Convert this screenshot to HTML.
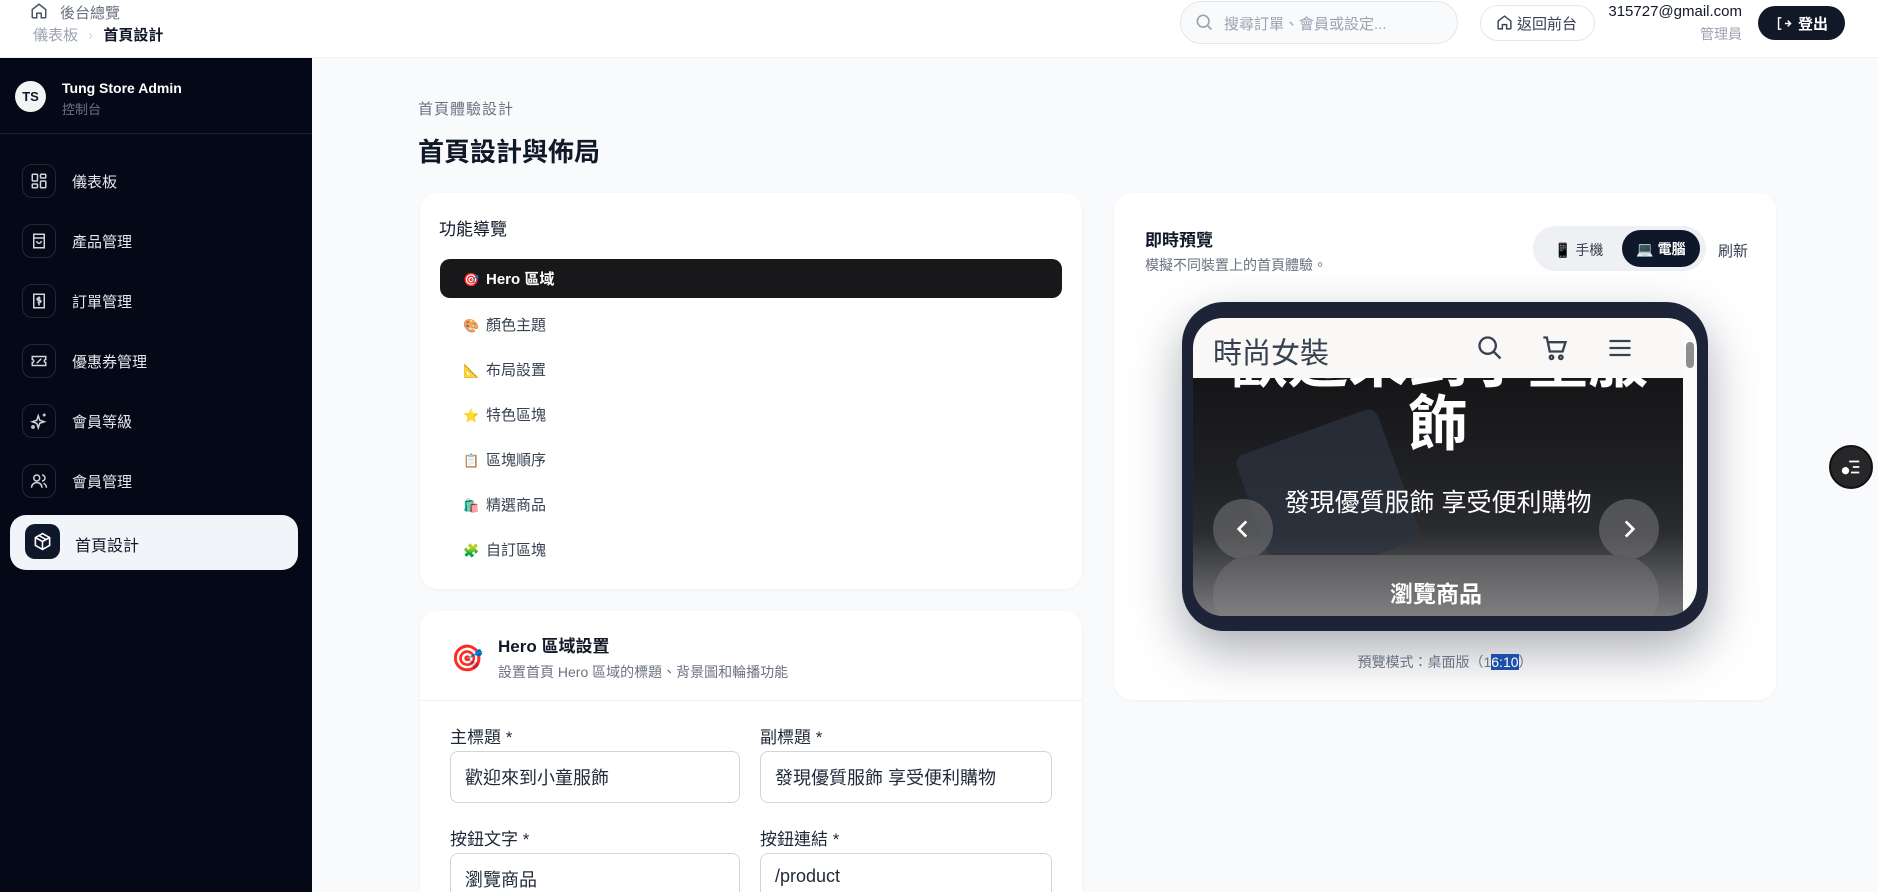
<!DOCTYPE html>
<html style="width:1878px;height:892px;overflow:hidden"><head><meta charset="utf-8"><style>
*{box-sizing:border-box;margin:0;padding:0}
body{width:1878px;height:892px;overflow:hidden;background:#f8fafc;font-family:"Liberation Sans","Noto Sans CJK TC",sans-serif;position:relative;color:#111827}
.a{position:absolute}
.side{left:0;top:58px;width:312px;height:834px;background:#040817}
.ib{position:absolute;left:22px;width:34px;height:34px;border:1px solid #1f2937;border-radius:10px;display:flex;align-items:center;justify-content:center}
.mt{position:absolute;left:72px;color:#e5e7eb;font-size:15px}
.card{background:#fff;border-radius:18px;box-shadow:0 1px 3px rgba(0,0,0,.04)}
.ni{position:absolute;left:463px;font-size:15px;color:#374151}
.ni span{display:inline-block;width:23px;font-size:13px}
.lbl{font-size:17px;color:#1f2937}
.inp{border:1px solid #d1d5db;border-radius:8px;background:#fff;font-size:18px;color:#1f2937;padding:0 14px;display:flex;align-items:center}
</style></head><body>
<!-- header -->
<div class="a" style="left:0;top:0;width:1878px;height:58px;background:#fff;border-bottom:1px solid #eef0f3"></div>
<svg class="a" style="left:30px;top:2px" width="18" height="18" viewBox="0 0 24 24" fill="none" stroke="#4b5563" stroke-width="2"><path d="M3 10l9-7 9 7v10a1 1 0 0 1-1 1h-5v-6h-6v6H4a1 1 0 0 1-1-1z"/></svg>
<div class="a" style="left:60px;top:2px;font-size:15px;color:#6b7280">後台總覽</div>
<div class="a" style="left:33px;top:24px;font-size:15px;color:#9ca3af">儀表板 <span style="margin:0 6px;color:#cbd5e1">›</span> <b style="color:#111827">首頁設計</b></div>
<div class="a" style="left:1180px;top:1px;width:278px;height:43px;border:1px solid #e5e7eb;border-radius:22px;background:#f9fafb"></div>
<svg class="a" style="left:1194px;top:12px" width="20" height="20" viewBox="0 0 24 24" fill="none" stroke="#9ca3af" stroke-width="2"><circle cx="11" cy="11" r="7"/><path d="M16 16l5 5"/></svg>
<div class="a" style="left:1224px;top:13px;font-size:15px;color:#9ca3af">搜尋訂單、會員或設定...</div>
<div class="a" style="left:1480px;top:5px;width:115px;height:36px;border:1px solid #e5e7eb;border-radius:18px;background:#fff"></div>
<svg class="a" style="left:1496px;top:14px" width="17" height="17" viewBox="0 0 24 24" fill="none" stroke="#374151" stroke-width="2"><path d="M3 10l9-7 9 7v10a1 1 0 0 1-1 1h-5v-6h-6v6H4a1 1 0 0 1-1-1z"/></svg>
<div class="a" style="left:1517px;top:13px;font-size:15px;color:#374151">返回前台</div>
<div class="a" style="left:1600px;top:3px;width:142px;text-align:right;font-size:15px;color:#111827">315727@gmail.com</div>
<div class="a" style="left:1600px;top:24px;width:142px;text-align:right;font-size:14px;color:#9ca3af">管理員</div>
<div class="a" style="left:1758px;top:6px;width:87px;height:34px;border-radius:17px;background:#111827;color:#fff;font-size:15px;font-weight:bold;display:flex;align-items:center;justify-content:center;gap:6px"><svg width="17" height="17" viewBox="0 0 24 24" fill="none" stroke="#fff" stroke-width="2"><path d="M9 4H5v16h4M14 12h8M18 8l4 4-4 4"/></svg>登出</div>
<!-- sidebar -->
<div class="a side"></div>
<div class="a" style="left:15px;top:81px;width:31px;height:31px;border-radius:50%;background:#f3f4f6;color:#111827;font-size:13px;font-weight:bold;display:flex;align-items:center;justify-content:center">TS</div>
<div class="a" style="left:62px;top:80px;color:#fff;font-size:14px;font-weight:bold">Tung Store Admin</div>
<div class="a" style="left:62px;top:99px;color:#6b7280;font-size:13px">控制台</div>
<div class="a" style="left:0;top:133px;width:312px;height:1px;background:#1a2030"></div>
<div class="ib" style="top:164px"><svg width="18" height="18" viewBox="0 0 24 24" fill="none" stroke="#d1d5db" stroke-width="2"><rect x="3" y="3" width="7" height="9" rx="1"/><rect x="14" y="3" width="7" height="5" rx="1"/><rect x="14" y="12" width="7" height="9" rx="1"/><rect x="3" y="16" width="7" height="5" rx="1"/></svg></div>
<div class="mt" style="top:171px">儀表板</div>
<div class="ib" style="top:224px"><svg width="18" height="18" viewBox="0 0 24 24" fill="none" stroke="#d1d5db" stroke-width="2"><path d="M5 3h14v18H5zM5 8h14M9 12a3 3 0 0 0 6 0"/></svg></div>
<div class="mt" style="top:231px">產品管理</div>
<div class="ib" style="top:284px"><svg width="18" height="18" viewBox="0 0 24 24" fill="none" stroke="#d1d5db" stroke-width="2"><path d="M5 3h14v18H5z"/><path d="M14 8h-3a1.5 1.5 0 0 0 0 3h2a1.5 1.5 0 0 1 0 3h-3M12 6v12"/></svg></div>
<div class="mt" style="top:291px">訂單管理</div>
<div class="ib" style="top:344px"><svg width="18" height="18" viewBox="0 0 24 24" fill="none" stroke="#d1d5db" stroke-width="2"><path d="M3 6h18v4a2 2 0 0 0 0 4v4H3v-4a2 2 0 0 0 0-4z M9 15l6-6"/></svg></div>
<div class="mt" style="top:351px">優惠券管理</div>
<div class="ib" style="top:404px"><svg width="18" height="18" viewBox="0 0 24 24" fill="none" stroke="#d1d5db" stroke-width="2"><path d="M11 5l2 6 6 2-6 2-2 6-2-6-6-2 6-2zM19 2v4M17 4h4"/><circle cx="4" cy="20" r="1.5"/></svg></div>
<div class="mt" style="top:411px">會員等級</div>
<div class="ib" style="top:464px"><svg width="18" height="18" viewBox="0 0 24 24" fill="none" stroke="#d1d5db" stroke-width="2"><circle cx="9" cy="8" r="4"/><path d="M2 21a7 7 0 0 1 14 0M16 4a4 4 0 0 1 0 8M22 21a7 7 0 0 0-4-6"/></svg></div>
<div class="mt" style="top:471px">會員管理</div>
<div class="a" style="left:10px;top:515px;width:288px;height:55px;border-radius:16px;background:#f1f5f9"></div>
<div class="a" style="left:25px;top:524px;width:35px;height:35px;border-radius:10px;background:#0f172a;display:flex;align-items:center;justify-content:center"><svg width="19" height="19" viewBox="0 0 24 24" fill="none" stroke="#fff" stroke-width="2"><path d="M12 2l9 5v10l-9 5-9-5V7zM3 7l9 5 9-5M12 12v10M7.5 4.5l9 5"/></svg></div>
<div class="a" style="left:75px;top:532px;font-size:16px;color:#111827">首頁設計</div>
<!-- main title -->
<div class="a" style="left:418px;top:98px;font-size:15px;color:#6b7280;letter-spacing:1px">首頁體驗設計</div>
<div class="a" style="left:418px;top:132px;font-size:26px;font-weight:bold;color:#111827">首頁設計與佈局</div>
<!-- nav card -->
<div class="a card" style="left:420px;top:193px;width:662px;height:396px"></div>
<div class="a" style="left:439px;top:215px;font-size:17px;color:#111827">功能導覽</div>
<div class="a" style="left:440px;top:259px;width:622px;height:39px;border-radius:10px;background:#18181b"></div>
<div class="ni" style="top:268px;color:#fff;font-weight:bold"><span>🎯</span>Hero 區域</div>
<div class="ni" style="top:314px"><span>🎨</span>顏色主題</div>
<div class="ni" style="top:359px"><span>📐</span>布局設置</div>
<div class="ni" style="top:404px"><span>⭐</span>特色區塊</div>
<div class="ni" style="top:449px"><span>📋</span>區塊順序</div>
<div class="ni" style="top:494px"><span>🛍️</span>精選商品</div>
<div class="ni" style="top:539px"><span>🧩</span>自訂區塊</div>
<!-- hero card -->
<div class="a card" style="left:420px;top:611px;width:662px;height:281px;border-radius:18px 18px 0 0"></div>
<div class="a" style="left:451px;top:643px;font-size:26px">🎯</div>
<div class="a" style="left:498px;top:632px;font-size:17px;font-weight:bold;color:#111827">Hero 區域設置</div>
<div class="a" style="left:498px;top:662px;font-size:14px;color:#6b7280">設置首頁 Hero 區域的標題、背景圖和輪播功能</div>
<div class="a" style="left:420px;top:700px;width:662px;height:1px;background:#eef0f3"></div>
<div class="a lbl" style="left:450px;top:723px">主標題 *</div>
<div class="a lbl" style="left:760px;top:723px">副標題 *</div>
<div class="a inp" style="left:450px;top:751px;width:290px;height:52px">歡迎來到小童服飾</div>
<div class="a inp" style="left:760px;top:751px;width:292px;height:52px">發現優質服飾 享受便利購物</div>
<div class="a lbl" style="left:450px;top:825px">按鈕文字 *</div>
<div class="a lbl" style="left:760px;top:825px">按鈕連結 *</div>
<div class="a inp" style="left:450px;top:853px;width:290px;height:39px;border-bottom:none;border-radius:8px 8px 0 0;align-items:flex-start;padding-top:12px">瀏覽商品</div>
<div class="a inp" style="left:760px;top:853px;width:292px;height:39px;border-bottom:none;border-radius:8px 8px 0 0;align-items:flex-start;padding-top:12px">/product</div>
<!-- preview card -->
<div class="a card" style="left:1114px;top:193px;width:662px;height:507px"></div>
<div class="a" style="left:1145px;top:226px;font-size:17px;font-weight:bold">即時預覽</div>
<div class="a" style="left:1145px;top:255px;font-size:14px;color:#6b7280">模擬不同裝置上的首頁體驗。</div>
<div class="a" style="left:1533px;top:226px;width:173px;height:45px;border-radius:23px;background:#eef0f4"></div>
<div class="a" style="left:1554px;top:240px;font-size:14px;color:#374151">📱 手機</div>
<div class="a" style="left:1622px;top:230px;width:78px;height:37px;border-radius:19px;background:#0f172a;color:#fff;font-size:14px;font-weight:bold;display:flex;align-items:center;justify-content:center">💻 電腦</div>
<div class="a" style="left:1718px;top:240px;font-size:15px;color:#374151">刷新</div>
<!-- device -->
<div class="a" style="left:1182px;top:302px;width:526px;height:329px;border-radius:42px;background:#1e2438;box-shadow:0 20px 50px rgba(15,23,42,.35)"></div>
<div class="a" style="left:1193px;top:318px;width:504px;height:298px;border-radius:30px;overflow:hidden;background:#1a1a1c">
 <div class="a" style="left:0;top:60px;width:490px;height:238px;background:linear-gradient(180deg,#161618 0%,#1f2024 40%,#2a2c30 65%,#7a7a7c 100%)"></div>
 <div class="a" style="left:60px;top:110px;width:150px;height:140px;background:#2c3340;opacity:.7;transform:rotate(-20deg);border-radius:10px"></div>
 <div class="a" style="left:0;top:12px;width:490px;text-align:center;color:#fff;font-size:60px;font-weight:bold;line-height:64px;white-space:nowrap;overflow:hidden">歡迎來到小童服</div>
 <div class="a" style="left:0;top:75px;width:490px;text-align:center;color:#fff;font-size:60px;font-weight:bold;line-height:64px">飾</div>
 <div class="a" style="left:0;top:165px;width:490px;text-align:center;color:#fff;font-size:25px">發現優質服飾 享受便利購物</div>
 <div class="a" style="left:20px;top:181px;width:60px;height:60px;border-radius:50%;background:rgba(120,120,120,.55);display:flex;align-items:center;justify-content:center"><svg width="26" height="26" viewBox="0 0 24 24" fill="none" stroke="#fff" stroke-width="2.5"><path d="M15 5l-7 7 7 7"/></svg></div>
 <div class="a" style="left:406px;top:181px;width:60px;height:60px;border-radius:50%;background:rgba(120,120,120,.55);display:flex;align-items:center;justify-content:center"><svg width="26" height="26" viewBox="0 0 24 24" fill="none" stroke="#fff" stroke-width="2.5"><path d="M9 5l7 7-7 7"/></svg></div>
 <div class="a" style="left:20px;top:237px;width:446px;height:80px;border-radius:40px;background:linear-gradient(180deg,#5a5a5c,#8a8a8c);color:#fff;font-size:23px;font-weight:bold;text-align:center;padding-top:20px">瀏覽商品</div>
 <div class="a" style="left:0;top:0;width:490px;height:60px;background:#f9f8f6"></div>
 <div class="a" style="left:20px;top:12px;font-size:29px;color:#374151">時尚女裝</div>
 <svg class="a" style="left:283px;top:16px" width="28" height="28" viewBox="0 0 24 24" fill="none" stroke="#374151" stroke-width="2"><circle cx="10" cy="10" r="7"/><path d="M15 15l6 6"/></svg>
 <svg class="a" style="left:348px;top:16px" width="28" height="28" viewBox="0 0 24 24" fill="none" stroke="#374151" stroke-width="2"><path d="M2 3h3l2.5 12h11L21 7H6"/><circle cx="9" cy="20" r="1.5"/><circle cx="17" cy="20" r="1.5"/></svg>
 <svg class="a" style="left:413px;top:16px" width="28" height="28" viewBox="0 0 24 24" fill="none" stroke="#374151" stroke-width="2"><path d="M3 6h18M3 12h18M3 18h18"/></svg>
 <div class="a" style="left:490px;top:0;width:14px;height:298px;background:#fafafa"></div>
 <div class="a" style="left:493px;top:24px;width:8px;height:26px;border-radius:4px;background:#8e8e8e"></div>
</div>
<div class="a" style="left:1114px;top:652px;width:662px;text-align:center;font-size:14px;color:#6b7280">預覽模式：桌面版（1<span style="background:#1e4fa8;color:#fff">6:10</span>）</div>
<!-- float btn -->
<div class="a" style="left:1829px;top:445px;width:44px;height:44px;border-radius:50%;background:#27272a;border:2px solid #111;display:flex;align-items:center;justify-content:center"><svg width="22" height="22" viewBox="0 0 24 24" fill="none" stroke="#fff" stroke-width="2"><path d="M10 6h11M14 12h7M12 18h9"/><circle cx="6" cy="16" r="3" fill="#fff"/></svg></div>
</body></html>
